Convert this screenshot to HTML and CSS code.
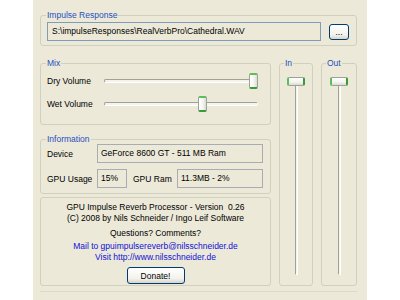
FILE: index.html
```html
<!DOCTYPE html>
<html lang="en">
<head>
  <meta charset="UTF-8"/>
  <title>GPU Impulse Reverb</title>
  <link rel="stylesheet" href="styles.css">
</head>
<body>
  <div class="window">
    <fieldset class="group ir">
      <legend>Impulse Response</legend>
      <div class="ir-row">
        <div class="field">S:\impulseResponses\RealVerbPro\Cathedral.WAV</div>
        <button class="btn browse">...</button>
      </div>
    </fieldset>

    <div class="main">
      <div class="left">
        <!-- mix sliders -->
        <fieldset class="group mix">
          <legend>Mix</legend>
          <div class="slider-row">
            <span class="label">Dry Volume</span>
            <div class="hslider">
              <div class="track"></div>
              <div class="thumb" style="--pos: 1"></div>
            </div>
          </div>
          <div class="slider-row">
            <span class="label">Wet Volume</span>
            <div class="hslider">
              <div class="track"></div>
              <div class="thumb" style="--pos: 0.65"></div>
            </div>
          </div>
        </fieldset>

        <fieldset class="group info">
          <legend>Information</legend>
          <div class="info-row">
            <span class="label">Device</span>
            <div class="box device-box">GeForce 8600 GT - 511 MB Ram</div>
          </div>
          <div class="info-row second">
            <span class="label">GPU Usage</span>
            <div class="box usage-box">15%</div>
            <span class="ram-label">GPU Ram</span>
            <div class="box ram-box">11.3MB - 2%</div>
          </div>
        </fieldset>

        <fieldset class="group about">
          <p>GPU Impulse Reverb Processor - Version&nbsp; 0.26</p>
          <p>(C) 2008 by Nils Schneider / Ingo Leif Software</p>
          <p class="q">Questions? Comments?</p>
          <p class="mail"><a href="#">Mail to gpuimpulsereverb@nilsschneider.de</a></p>
          <p><a href="#">Visit http://www.nilsschneider.de</a></p>
          <button class="btn donate">Donate!</button>
        </fieldset>
      </div>

      <fieldset class="group vgroup in">
        <legend>In</legend>
        <div class="vslider">
          <div class="vtrack"></div>
          <div class="vthumb"></div>
        </div>
      </fieldset>

      <fieldset class="group vgroup out">
        <legend>Out</legend>
        <div class="vslider">
          <div class="vtrack"></div>
          <div class="vthumb"></div>
        </div>
      </fieldset>
    </div>
    <div class="bottom-line"></div>
  </div>
</body>
</html>
```

FILE: styles.css
```css
body {
  margin: 0;
  background: #fff;
  font-family: "Liberation Sans", Arial, sans-serif;
  font-size: 8.5px;
  color: #000;
}
.window {
  margin-left: 33px;
  width: 334px;
  height: 300px;
  box-sizing: border-box;
  padding: 10px 10px 0 7px;
  background: #ECE9D8;
}
.group {
  margin: 0;
  min-width: 0;
  box-sizing: border-box;
  border: 1px solid #D0D0BF;
  border-radius: 3px;
  padding: 0 6px;
}
.group legend {
  padding: 0 1px;
  margin-left: -1px;
  line-height: 10px;
  color: #1F4FC0;
}
.btn {
  font: inherit;
  color: #000;
  padding: 0;
  border: 1px solid #003C74;
  border-radius: 3px;
  background: linear-gradient(#fff, #F3F2EC 70%, #D8D3C8);
}

/* impulse response */
.ir {
  width: 317px;
  padding: 2px 7px 4px 6px;
}
.ir-row {
  display: flex;
  align-items: center;
  gap: 8px;
}
.field {
  flex: 1;
  height: 19px;
  box-sizing: border-box;
  border: 1px solid #7F9DB9;
  padding: 0 4px;
  line-height: 17px;
  white-space: nowrap;
  overflow: hidden;
}
.browse {
  width: 20px;
  height: 16px;
  line-height: 12px;
}

.main {
  display: flex;
  gap: 8px;
  margin-top: 12px;
  height: 228px;
}
.left {
  width: 231px;
  display: flex;
  flex-direction: column;
}

/* mix */
.mix {
  padding: 1px 12px 9px 6px;
}
.slider-row {
  display: flex;
  align-items: center;
  height: 23px;
}
.slider-row .label {
  width: 57px;
}
.hslider {
  position: relative;
  width: 154px;
  height: 16px;
}
.track {
  margin-top: 6px;
  height: 2px;
  border: 1px solid;
  border-color: #A3A194 #fff #fff #A3A194;
  border-radius: 2px;
  background: #F4F3EE;
}
.thumb {
  position: absolute;
  top: 0;
  left: calc((100% - 9px) * var(--pos));
  width: 9px;
  height: 16px;
  box-sizing: border-box;
  border: 1px solid #9AA39A;
  border-top: 2px solid #5CBD5C;
  border-bottom: 2px solid #3A9A3A;
  border-radius: 2px;
  background: linear-gradient(90deg, #fff, #F3F3EE 60%, #DADAD2);
}

/* information */
.info {
  margin-top: 9px;
  padding: 0 6px 5px;
}
.info-row {
  display: flex;
  align-items: center;
}
.info-row.second {
  margin-top: 6px;
}
.info .label {
  width: 50px;
}
.box {
  height: 19px;
  box-sizing: border-box;
  border: 1px solid #A7ADB2;
  padding: 0 3px;
  line-height: 17px;
  white-space: nowrap;
}
.device-box {
  width: 166px;
}
.usage-box {
  width: 30px;
}
.ram-label {
  width: 50px;
  box-sizing: border-box;
  padding-left: 6px;
}
.ram-box {
  width: 86px;
}

/* about */
.about {
  flex: 1;
  margin-top: 3px;
  padding: 4px 6px 0;
  text-align: center;
}
.about p {
  margin: 0;
  line-height: 11px;
}
.about .q {
  margin-top: 4px;
}
.about .mail {
  margin-top: 2px;
}
.about a {
  color: #1010D8;
  text-decoration: none;
}
.donate {
  margin-top: 4px;
  width: 58px;
  height: 17px;
}

/* in / out */
.vgroup {
  padding: 0;
}
.vgroup legend {
  margin-left: 4px;
}
.in {
  width: 34px;
}
.out {
  width: 36px;
}
.vslider {
  position: relative;
  margin-top: 9px;
  height: 198px;
  display: flex;
  justify-content: center;
}
.vtrack {
  width: 1px;
  margin-top: 4px;
  border: 1px solid;
  border-color: #A3A194 #fff #fff #A3A194;
  border-radius: 2px;
  background: #F4F3EE;
}
.vthumb {
  position: absolute;
  top: 0;
  left: 50%;
  margin-left: -9px;
  width: 18px;
  height: 9px;
  box-sizing: border-box;
  border: 1px solid #9AA39A;
  border-left: 2px solid #5CBD5C;
  border-right: 2px solid #3A9A3A;
  border-radius: 2px;
  background: linear-gradient(#fff, #F3F3EE 60%, #DADAD2);
}
.bottom-line {
  margin-top: 5px;
  border-top: 1px solid #DCD9C8;
}
```
